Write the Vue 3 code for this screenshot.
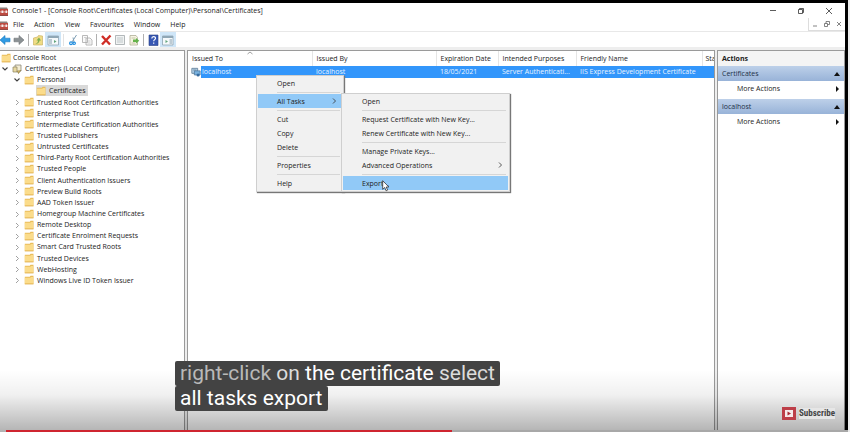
<script setup>
import { ref } from 'vue'

const menus = ['File', 'Action', 'View', 'Favourites', 'Window', 'Help']

const stores = [
  'Trusted Root Certification Authorities', 'Enterprise Trust', 'Intermediate Certification Authorities',
  'Trusted Publishers', 'Untrusted Certificates', 'Third-Party Root Certification Authorities',
  'Trusted People', 'Client Authentication Issuers', 'Preview Build Roots', 'AAD Token Issuer',
  'Homegroup Machine Certificates', 'Remote Desktop', 'Certificate Enrolment Requests',
  'Smart Card Trusted Roots', 'Trusted Devices', 'WebHosting', 'Windows Live ID Token Issuer',
]

const tree = [
  { label: 'Console Root', level: 0 },
  { label: 'Certificates (Local Computer)', level: 1, state: 'open', icon: 'cert' },
  { label: 'Personal', level: 2, state: 'open' },
  { label: 'Certificates', level: 3, selected: true },
  ...stores.map((label) => ({ label, level: 2, state: 'closed' })),
]

const contextMenu = [
  [{ label: 'Open' }],
  [{ label: 'All Tasks', active: true, sub: true }],
  [{ label: 'Cut' }, { label: 'Copy' }, { label: 'Delete' }],
  [{ label: 'Properties' }],
  [{ label: 'Help' }],
]
const taskMenu = [
  [{ label: 'Open' }],
  [{ label: 'Request Certificate with New Key...' }, { label: 'Renew Certificate with New Key...' }],
  [{ label: 'Manage Private Keys...' }, { label: 'Advanced Operations', sub: true }],
  [{ label: 'Export...', active: true }],
]

const actionGroups = ['Certificates', 'localhost']
const progress = ref(53)
</script>

<template>
  <div class="screen">
    <div class="window">
      <header class="titlebar">
        <svg class="app-icon" viewBox="0 0 9 10"><path d="M0 1.500h7l1 2H0z" fill="#8c7f7c" /><path d="M0 3h8v6.500H0z" fill="#bd4a40" /><path d="M0 5.500h8v.8H0z" fill="#e9c5bf" /><path d="M1.500 4.500h1.800v2.500H1.500zM5.500 4.500h1.500v2.500H5.500z" fill="#f5eeee" /><path d="M0 9h8v.8H0z" fill="#7d332d" /></svg>
        <h1>Console1 - [Console Root\Certificates (Local Computer)\Personal\Certificates]</h1>
        <div class="window-buttons">
          <button aria-label="Minimise"><svg viewBox="0 0 8 8"><path d="M1 3.500h6" /></svg></button>
          <button aria-label="Restore"><svg viewBox="0 0 8 8"><path d="M1.500 2.500h4v4h-4zM2.500 2.500v-1h4v4h-1" /></svg></button>
          <button aria-label="Close"><svg viewBox="0 0 8 8"><path d="M1 1l6 6M7 1L1 7" /></svg></button>
        </div>
      </header>

      <nav class="menubar">
        <svg class="app-icon" viewBox="0 0 9 10"><path d="M0 1.500h7l1 2H0z" fill="#8c7f7c" /><path d="M0 3h8v6.500H0z" fill="#bd4a40" /><path d="M0 5.500h8v.8H0z" fill="#e9c5bf" /><path d="M1.500 4.500h1.800v2.500H1.500zM5.500 4.500h1.500v2.500H5.500z" fill="#f5eeee" /><path d="M0 9h8v.8H0z" fill="#7d332d" /></svg>
        <button v-for="m in menus" :key="m">{{ m }}</button>
        <div class="child-buttons">
          <button aria-label="Minimise child window"><svg viewBox="0 0 8 8"><path d="M2 6h4" /></svg></button>
          <button aria-label="Restore child window"><svg viewBox="0 0 8 8"><path d="M1.500 3.500h3v3h-3zM3 3.500v-2h3.500v3h-2" /></svg></button>
          <button aria-label="Close child window"><svg viewBox="0 0 8 8"><path d="M2 2l4 4M6 2L2 6" /></svg></button>
        </div>
      </nav>

      <div class="toolbar">
        <button aria-label="Back"><svg viewBox="0 0 12 12"><path d="M1 6l5-4.500v2.700h5v3.600H6v2.700z" fill="#2f9be4" stroke="#1979bd" stroke-width=".6" /></svg></button>
        <button aria-label="Forward"><svg viewBox="0 0 12 12"><path d="M11 6L6 1.500v2.700H1v3.600h5v2.700z" fill="#8b9194" stroke="#6e7376" stroke-width=".6" /></svg></button>
        <i class="sep"></i>
        <button aria-label="Up one level"><svg viewBox="0 0 12 12"><path d="M1.500 4l4-1 1-1.500 4 .500v9h-9z" fill="#f0dc85" stroke="#c5ab58" stroke-width=".6" /><path d="M3 9.500c2 0 3-1 3-3H4.500L7 3.500l2 3H7.500c0 2.500-2 3.500-4.500 3z" fill="#7fae4e" /></svg></button>
        <button class="on" aria-label="Show or hide console tree"><svg viewBox="0 0 12 12"><path d="M1 2h10.500v9H1z" fill="#f5f9fb" stroke="#8fa5b3" stroke-width=".8" /><path d="M1 2h10.500v2H1z" fill="#8fa7b6" /><path d="M2 5h3v5H2z" fill="#bccbd4" /><path d="M7 6l2.500 1.500L7 9z" fill="#63a57c" /></svg></button>
        <i class="sep light"></i>
        <button aria-label="Cut"><svg viewBox="0 0 12 12"><path d="M9.500 1L5 8M6 3.500L7 8" fill="none" stroke="#7e9eb5" /><circle cx="4" cy="9.300" r="1.400" fill="none" stroke="#248fdf" stroke-width="1.200" /><circle cx="7.200" cy="9.300" r="1.200" fill="none" stroke="#248fdf" stroke-width="1.200" /></svg></button>
        <button aria-label="Copy"><svg viewBox="0 0 12 12"><path d="M1.500 1.500h5v7h-5zM5 4h4l2 2v5H5z" fill="#fafafa" stroke="#a8a8a8" stroke-width=".8" /><path d="M6.500 7h3M6.500 9h3M3 3.500h2" stroke="#bbb" stroke-width=".7" /></svg></button>
        <i class="sep"></i>
        <button aria-label="Delete"><svg viewBox="0 0 12 12"><path d="M2 2l8 8.500M10.500 1.500L2 10.500" fill="none" stroke="#d02d26" stroke-width="2.400" /></svg></button>
        <button aria-label="Properties"><svg viewBox="0 0 12 12"><path d="M1.500 1.500h9v9h-9z" fill="#f1f3f3" stroke="#9fa7aa" stroke-width=".8" /><path d="M3 4h6M3 6h6M3 8h6" stroke="#b4bbbe" stroke-width=".8" /></svg></button>
        <button aria-label="Export list"><svg viewBox="0 0 12 12"><path d="M2 1.500h6l1.500 2v7.500H2z" fill="#f7f5e3" stroke="#b0ae98" stroke-width=".8" /><path d="M3.500 4h4M3.500 9h4" stroke="#b9b799" stroke-width=".8" /><path d="M5 5.500h3V4l3.300 2.800L8 9.500V8H5z" fill="#65b34c" /></svg></button>
        <i class="sep"></i>
        <button aria-label="Help"><svg viewBox="0 0 12 12"><path d="M2 1h9v10.500H2z" fill="#3858b4" stroke="#293f83" stroke-width=".6" /><path d="M4.800 4.500c0-2.500 3.700-2.500 3.700-.300 0 1.500-1.800 1.400-1.800 3M6.700 8.500v1.300" fill="none" stroke="#fff" stroke-width="1.200" /></svg></button>
        <button class="on" aria-label="Show or hide action pane"><svg viewBox="0 0 12 12"><path d="M.5 2H11v9H.5z" fill="#f5f9fb" stroke="#8fa5b3" stroke-width=".8" /><path d="M.5 2H11v2H.5z" fill="#8fa7b6" /><path d="M7.500 5h2.500v5H7.500z" fill="#bccbd4" /><path d="M3.500 6L6 7.500 3.500 9z" fill="#63a57c" /></svg></button>
      </div>

      <main class="panes">
        <nav class="tree">
          <ul>
            <li v-for="n in tree" :key="n.label + n.level" :class="['level-' + n.level, { selected: n.selected }]">
              <span v-if="n.level" class="twist">
                <svg v-if="n.state === 'open'" viewBox="0 0 8 8"><path d="M1.500 2.500L4 5l2.500-2.500" fill="none" stroke="#404040" stroke-width="1.100" /></svg>
                <svg v-else-if="n.state" viewBox="0 0 8 8"><path d="M3 2L5.500 4.500 3 7" fill="none" stroke="#a0a0a0" /></svg>
              </span>
              <span class="node">
                <svg v-if="n.icon" class="icon" viewBox="0 0 10 10"><path d="M3 1h6v6H3z" fill="#f3ecd2" stroke="#8b8878" stroke-width=".8" /><path d="M1 3h4v5H1z" fill="#e8d9a2" stroke="#8a815e" stroke-width=".7" /><path d="M5 7l1.500 2.500L9 6" fill="#d0b35c" stroke="#80734c" stroke-width=".7" /></svg>
                <svg v-else class="icon" viewBox="0 0 10 10"><path d="M.8 1.800h5l.7-1h3v8.400H.8z" fill="#e9bd5b" /><path d="M.8 2.800h5.500l.7-.8h2.200v6.800H.8z" fill="#fbdc8b" /><path d="M.8 8.600h8.600V9.200H.8z" fill="#dba944" /></svg>
                <span>{{ n.label }}</span>
              </span>
            </li>
          </ul>
        </nav>

        <section class="list">
          <table>
            <colgroup><col class="c1" /><col class="c1" /><col class="c3" /><col class="c4" /><col class="c5" /><col /></colgroup>
            <thead>
              <tr>
                <th class="sorted">Issued To<svg viewBox="0 0 8 4"><path d="M1.500 3L4 1l2.500 2" fill="none" stroke="#888" stroke-width=".8" /></svg></th>
                <th>Issued By</th><th>Expiration Date</th><th>Intended Purposes</th><th>Friendly Name</th><th>Sta</th>
              </tr>
            </thead>
            <tbody>
              <tr>
                <td class="name">
                  <div>
                    <svg viewBox="0 0 12 12"><path d="M1 1h7v6H1z" fill="#b8d5ec" stroke="#5f7d96" /><path d="M4 4h7v5H4z" fill="#79b1de" stroke="#426b91" stroke-width=".8" /><circle cx="8.500" cy="9" r="1.800" fill="#356b9f" /><path d="M2.500 3h4" stroke="#58748a" stroke-width=".8" /></svg>
                    <span>localhost</span>
                  </div>
                </td>
                <td>localhost</td><td>18/05/2021</td><td>Server Authenticati...</td><td>IIS Express Development Certificate</td><td></td>
              </tr>
            </tbody>
          </table>
        </section>

        <aside class="actions">
          <h2>Actions</h2>
          <section v-for="g in actionGroups" :key="g">
            <h3>{{ g }}<svg viewBox="0 0 6 6"><path d="M0 5l3-4 3 4z" /></svg></h3>
            <button>More Actions<svg viewBox="0 0 6 6"><path d="M2 0l3 3-3 3z" /></svg></button>
          </section>
        </aside>
      </main>
    </div>

    <div class="popup context">
      <div v-for="(group, i) in contextMenu" :key="i" class="group">
        <button v-for="item in group" :key="item.label" :class="{ active: item.active }">
          {{ item.label }}<svg v-if="item.sub" viewBox="0 0 6 6"><path d="M2 .5L4.500 3 2 5.500" /></svg>
        </button>
      </div>
    </div>
    <div class="popup tasks">
      <div v-for="(group, i) in taskMenu" :key="i" class="group">
        <button v-for="item in group" :key="item.label" :class="{ active: item.active }">
          {{ item.label }}<svg v-if="item.sub" viewBox="0 0 6 6"><path d="M2 .5L4.500 3 2 5.500" /></svg>
        </button>
      </div>
    </div>
    <svg class="pointer" viewBox="0 0 8 12"><path d="M.7.7v8.600l2-1.800 1.400 3.300 1.500-.700-1.400-3.100h2.700z" fill="#fff" stroke="#333" stroke-width=".8" /></svg>

    <div class="shade"></div>
    <div class="captions">
      <p><span class="dim">right-click</span> <span class="soft">on</span> the certificate <span class="soft">select</span></p>
      <p>all tasks export</p>
    </div>
    <a class="subscribe" href="#">
      <svg viewBox="0 0 14 13"><path d="M0 0h14v13H0z" fill="#bd3e48" /><path d="M3 3h8v7H3z" fill="#f6e9ea" /><path d="M5.500 4.500L9 6.500l-3.500 2z" fill="#a82833" /></svg>
      <span>Subscribe</span>
    </a>
    <div class="progress"><div class="played" :style="{ width: progress + '%' }"></div></div>
  </div>
</template>

<style>
body { background: #000; }
</style>

<style scoped>
* { box-sizing: border-box; }
.screen {
  position: relative;
  display: flex;
  min-height: 100vh;
  padding: 3px 3px 0 0;
  overflow: hidden;
  background: #000;
  border-right: 2px solid #ececec;
  color: #222;
  font: 7px/11px "Open Sans", "Noto Sans", sans-serif;
}
h1, h2, h3, p, ul { margin: 0; padding: 0; font: inherit; }
button { display: flex; align-items: center; padding: 0; border: 0; background: none; color: inherit; font: inherit; white-space: nowrap; }
svg { display: block; flex: none; }
.window { flex: 1; display: flex; flex-direction: column; min-width: 0; background: #fff; }
.titlebar, .menubar { display: flex; align-items: center; }
.titlebar { height: 15px; }
.app-icon { width: 9px; height: 10px; }
.titlebar h1 { padding-left: 3px; white-space: nowrap; }
.window-buttons { display: flex; gap: 20px; margin-left: auto; padding-right: 12px; }
.window-buttons svg { width: 8px; height: 8px; fill: none; stroke: #333; stroke-width: .8; }
.menubar { height: 13px; gap: 10px; }
.menubar .app-icon { margin-right: -6px; }
.child-buttons { display: flex; gap: 4px; height: 13px; margin-left: auto; padding: 0 2px; border: solid #ddd; border-width: 0 0 1px 1px; }
.child-buttons svg { width: 8px; height: 8px; fill: none; stroke: #666; stroke-width: .8; }
.toolbar { display: flex; align-items: center; height: 16px; margin-left: -2px; border-top: 1px solid #e8e8e8; }
.toolbar button { width: 14px; height: 15px; justify-content: center; }
.toolbar button.on { width: 16px; background: #cfe6f8; }
.toolbar svg { width: 12px; height: 12px; }
.sep { width: 1px; height: 12px; margin: 0 2px; background: #b0b0b0; }
.sep.light { background: #e2e2e2; }

.panes { flex: 1; display: flex; gap: 2px; padding-top: 3px; background: #eeeeee; }
.tree, .list, .actions { border: solid #9a9a9a; border-width: 1px 1px 0 0; background: #fff; }
.tree { flex: none; width: 185px; padding-top: 1px; }
.tree ul { display: grid; grid-auto-rows: 1fr; height: 234px; list-style: none; }
.tree li { display: flex; align-items: center; min-height: 0; white-space: nowrap; }
.tree .level-0 { padding-left: 1px; }
.tree .level-2 { padding-left: 12px; }
.tree .level-3 { padding-left: 24px; }
.twist { width: 12px; padding-left: 1px; }
.twist svg { width: 8px; height: 8px; }
.node { display: flex; align-items: center; gap: 3px; height: 11px; padding-right: 2px; }
.level-0 .node { gap: 2px; }
.icon { width: 10px; height: 10px; }
.selected .node { background: #d9d9d9; }

.list { flex: 1; min-width: 0; overflow: hidden; border-left-width: 1px; }
table { width: 100%; table-layout: fixed; border-collapse: collapse; }
.c1 { width: 124px; }
.c3 { width: 62px; }
.c4 { width: 78px; }
.c5 { width: 126px; }
th, td { padding: 0 0 0 4px; overflow: hidden; font-weight: 400; text-align: left; white-space: nowrap; }
th { height: 15px; border-right: 1px solid #e5e5e5; }
td { height: 12px; background: #3296fb; color: #e9f4ff; line-height: 12px; }
th:last-child { padding-left: 3px; border-right: 0; }
.sorted { position: relative; }
.sorted svg { position: absolute; top: 0; left: 50%; width: 8px; height: 4px; margin-left: -4px; }
td.name { padding: 0; background: #fff; }
.name div { display: flex; align-items: center; }
.name svg { width: 10px; height: 11px; margin-left: 3px; }
.name span { flex: 1; height: 12px; padding-left: 1px; background: #3296fb; }

.actions { flex: none; width: 128px; border-left-width: 1px; }
.actions h2 { height: 15px; padding: 2px 4px; background: #f4f4f4; font-weight: 700; }
.actions h3, .actions button { display: flex; width: 100%; align-items: center; justify-content: space-between; padding: 0 4px; }
.actions h3 { height: 15px; background: linear-gradient(#bdd0e9, #98b3d8); color: #1d3047; }
.actions button { height: 15px; margin-bottom: 3px; padding-left: 19px; }
.actions svg { width: 6px; height: 6px; fill: #111; }

.popup { position: absolute; padding: 0 1px 1px; background: #f1f1f1; border: 1px solid #cfcfcf; box-shadow: 1px 1px 1px #777; }
.context { left: 256px; top: 75px; width: 88px; }
.tasks { left: 341px; top: 93px; width: 169px; }
.group + .group { position: relative; padding-top: 4px; }
.group + .group::before { content: ""; position: absolute; top: 2px; left: 19px; right: 2px; height: 1px; background: #d6d6d6; }
.popup button { width: 100%; height: 14px; padding: 0 5px 0 19px; justify-content: space-between; }
.popup .active { background: #91c9f7; }
.popup svg { width: 6px; height: 6px; fill: none; stroke: #333; stroke-width: .8; }
.pointer { position: absolute; left: 382px; top: 180px; width: 8px; height: 12px; }

.shade { position: absolute; inset: auto 0 0 0; height: 62px; background: linear-gradient(transparent, rgba(0, 0, 0, .06) 40%, rgba(0, 0, 0, .3)); }
.captions { position: absolute; left: 175px; bottom: 21px; color: #fff; font: 21px/25px Roboto, sans-serif; }
.captions p { width: fit-content; padding: 0 5px; border-radius: 2px; background: #434343; white-space: nowrap; }
.dim { color: #b9b9b9; }
.soft { color: #dcdcdc; }
.subscribe { position: absolute; right: 13px; bottom: 12px; display: flex; align-items: center; gap: 3px; color: #444; font: 700 9px/11px "Liberation Sans Narrow", "Roboto Condensed", Roboto, sans-serif; text-decoration: none; }
.subscribe svg { width: 14px; height: 13px; }
.subscribe span { background: #e6e6e6; }
.progress { position: absolute; inset: auto 0 0 6px; height: 2px; background: #a8a8a8; }
.played { height: 2px; background: #cf2530; }
</style>
